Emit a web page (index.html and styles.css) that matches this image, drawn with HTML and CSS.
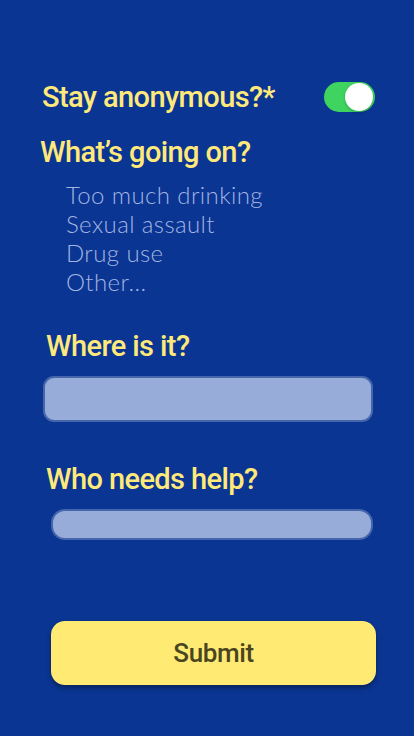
FILE: index.html
```html
<!DOCTYPE html>
<html>
<head>
<meta charset="utf-8">
<link rel="stylesheet" href="styles.css">
</head>
<body>
<main class="screen">
  <div class="row-anon">
    <h2 class="label label-anon">Stay anonymous?*</h2>
    <div class="toggle"><div class="knob"></div></div>
  </div>
  <h2 class="label label-what">What’s going on?</h2>
  <ul class="options">
    <li>Too much drinking</li>
    <li>Sexual assault</li>
    <li>Drug use</li>
    <li>Other...</li>
  </ul>
  <h2 class="label label-where">Where is it?</h2>
  <div class="field field-where"></div>
  <h2 class="label label-who">Who needs help?</h2>
  <div class="field field-who"></div>
  <button class="submit">Submit</button>
</main>
</body>
</html>
```
FILE: styles.css
```css
html, body {
  margin: 0;
  padding: 0;
  background: #0a3592;
}
.screen {
  width: 414px;
  height: 736px;
  box-sizing: border-box;
  display: flex;
  flex-direction: column;
  font-family: Roboto, "Liberation Sans", sans-serif;
}
.label {
  margin: 0;
  color: #ffe97a;
  font-weight: 500;
  font-size: 29px;
  letter-spacing: -0.6px;
  line-height: 32px;
}
.row-anon {
  display: flex;
  align-items: center;
  justify-content: space-between;
  margin: 81px 39px 0 42px;
}
.toggle {
  width: 51px;
  height: 30px;
  border-radius: 15px;
  background: #3fd45f;
  display: flex;
  align-items: center;
  justify-content: flex-end;
  padding: 0 2px;
  box-sizing: border-box;
}
.knob {
  width: 28px;
  height: 28px;
  border-radius: 50%;
  background: #fff;
  box-shadow: 0 1px 3px rgba(0,0,0,0.25);
}
.label-what {
  margin: 23px 0 0 40px;
}
.options {
  list-style: none;
  margin: 12px 0 0 66px;
  padding: 0;
  font-family: Lato, sans-serif;
  font-weight: 300;
  font-size: 24px;
  letter-spacing: 0.4px;
  line-height: 29px;
  color: #a2b4e2;
}
.label-where {
  margin: 34px 0 0 46px;
}
.field {
  background: #97acd9;
  border: 2px solid #4566aa;
  box-sizing: border-box;
}
.field-where {
  margin: 14px 41px 0 43px;
  height: 46px;
  border-radius: 11px;
}
.label-who {
  margin: 41px 0 0 46px;
}
.field-who {
  margin: 14px 41px 0 51px;
  height: 31px;
  border-radius: 14px;
}
.submit {
  margin: 81px 38px 0 51px;
  height: 64px;
  border: none;
  border-radius: 14px;
  background: #ffeb74;
  color: #4a4520;
  font-family: Roboto, sans-serif;
  font-weight: 500;
  font-size: 26px;
  letter-spacing: -0.4px;
  box-shadow: 0 3px 5px rgba(0,0,0,0.35);
  padding: 0;
}
```
